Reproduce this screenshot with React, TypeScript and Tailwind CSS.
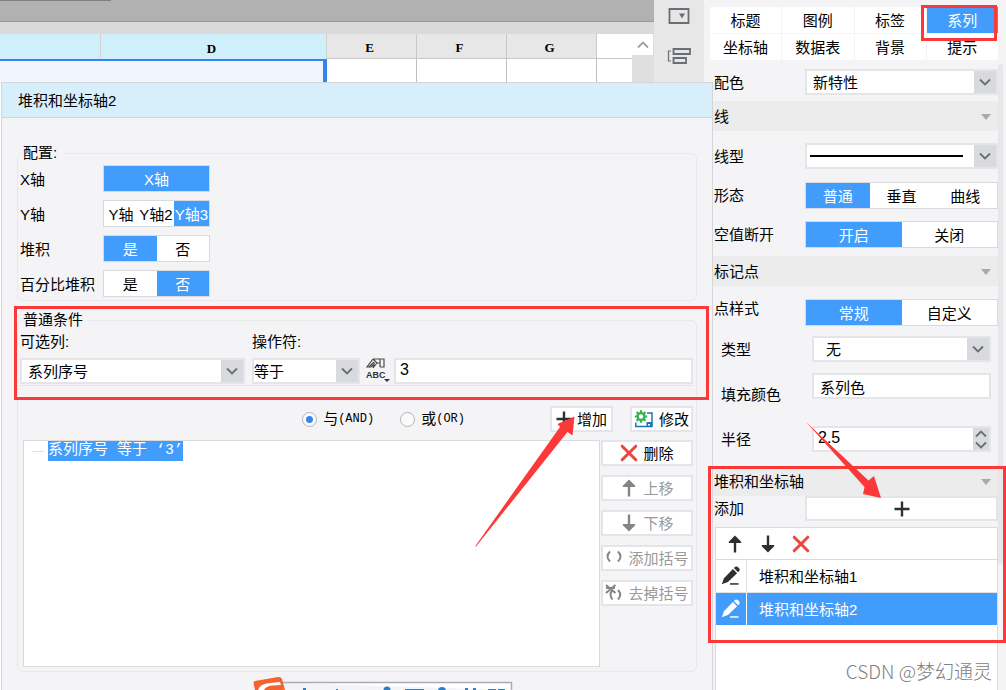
import React, { useState } from "react";

type Option = { label: string; width?: string };

function Chevron({ up = false, className = "" }: { up?: boolean; className?: string }) {
  return (
    <svg viewBox="0 0 12 8" className={`h-2 w-3 ${className}`} fill="none" stroke="currentColor" strokeWidth="1.8">
      <path d={up ? "M1 6.5 6 1.5 11 6.5" : "M1 1.5 6 6.5 11 1.5"} />
    </svg>
  );
}

function Triangle() {
  return (
    <svg viewBox="0 0 10 6" className="h-[6px] w-[10px]" fill="#a9a9a9">
      <path d="M0 0H10L5 6Z" />
    </svg>
  );
}

function Plus() {
  return (
    <svg viewBox="0 0 16 16" className="size-4 shrink-0" stroke="#2f2f2f" strokeWidth="2.4">
      <path d="M8 .5V15.500M.5 8H15.500" />
    </svg>
  );
}

function Cross() {
  return (
    <svg viewBox="0 0 18 18" className="size-[18px] shrink-0" stroke="#e9473f" strokeWidth="3" strokeLinecap="round">
      <path d="M2.200 2.200 15.800 15.800M15.800 2.200 2.200 15.800" />
    </svg>
  );
}

function Arrow({ down = false, color }: { down?: boolean; color: string }) {
  return (
    <svg viewBox="0 0 18 18" className="size-[18px] shrink-0" fill={color}>
      {down ? (
        <path d="M7.800 .5H10.200V10H15.200V11.200L9 17.500 2.800 11.200V10H7.800Z" />
      ) : (
        <path d="M7.800 17.500H10.200V8H15.200V6.800L9 .5 2.800 6.800V8H7.800Z" />
      )}
    </svg>
  );
}

function Pencil({ color }: { color: string }) {
  return (
    <svg viewBox="0 0 20 20" className="size-5" fill={color}>
      <path d="M.8 18.300 3 12.200 11.900 3 16.100 7.200 6.900 16.100Z" />
      <path d="M12.900 2 14.300 .8Q15.600 0 16.800 1L18.200 2.400Q19.200 3.700 18.300 5L17.100 6.200Z" />
      <path d="M9 17.200H17.500V18.700H9Z" />
    </svg>
  );
}

function GearSave() {
  return (
    <svg viewBox="0 0 20 18" className="h-[18px] w-5 shrink-0" fill="none">
      <path d="M13 3H18V16.5H1.8V12.5" stroke="#1f74b9" strokeWidth="1.5" />
      <path d="M12.5 12H18V16.5H12.5Z" fill="#1f74b9" />
      <path d="M14 14H16V15.5H14Z" fill="#fff" />
      <circle cx="7" cy="6.5" r="3.4" stroke="#36b34f" strokeWidth="2.4" fill="#fff" />
      <path
        d="M7 .3V3M7 10V12.7M.8 6.5H3.5M10.5 6.5H13.2M2.6 2.1 4.5 4M9.5 9 11.4 10.9M2.6 10.9 4.5 9M9.5 4 11.4 2.1"
        stroke="#36b34f"
        strokeWidth="2.2"
      />
    </svg>
  );
}

function Brackets({ crossed = false }: { crossed?: boolean }) {
  return (
    <svg viewBox="0 0 18 18" className="size-[18px] shrink-0" fill="none" stroke="#858585" strokeWidth="2">
      {crossed ? (
        <>
          <path d="M7.500 6Q3.500 10.500 7.500 15.500M13 6Q17.500 10.500 13 15.500" />
          <path d="M1 1 10.500 9M10.500 1 1 9M1 4H10" strokeWidth="2" />
        </>
      ) : (
        <path d="M5 2.500Q0 7.500 5 12.500M13 2.500Q18 7.500 13 12.500" />
      )}
    </svg>
  );
}

function Segments({ name, options, initial }: { name: string; options: Option[]; initial: number }) {
  const [active, setActive] = useState(initial);
  return (
    <div role="group" aria-label={name} className="flex h-[27px] w-full border border-[#d9dade] bg-white">
      {options.map((o, i) => (
        <button
          key={o.label}
          type="button"
          aria-pressed={i === active}
          onClick={() => setActive(i)}
          className={`h-full whitespace-nowrap pt-[3px] ${o.width ?? "flex-1"} ${
            i === active ? "bg-[#429cfb] text-white" : "bg-white text-black"
          }`}
        >
          {o.label}
        </button>
      ))}
    </div>
  );
}

function Dropdown({
  id,
  value,
  pad = "pl-[7px]",
  children,
}: {
  id: string;
  value: string;
  pad?: string;
  children?: React.ReactNode;
}) {
  return (
    <div className="grid h-[26px] w-full items-center border-2 border-[#e4e5e8] bg-white">
      <select
        id={id}
        className={`col-start-1 row-start-1 h-[22px] w-full appearance-none bg-white pt-px leading-[22px] outline-none ${pad}`}
      >
        <option>{value}</option>
      </select>
      {children}
      <span className="pointer-events-none col-start-1 row-start-1 flex h-[22px] w-[22px] items-center justify-center justify-self-end bg-[#d9dade] text-[#6b6d72]">
        <Chevron />
      </span>
    </div>
  );
}

function SideButton({ icon, text, disabled = false }: { icon: React.ReactNode; text: string; disabled?: boolean }) {
  return (
    <button
      type="button"
      disabled={disabled}
      className="flex h-[26px] w-full items-center justify-center gap-[5px] border-2 border-[#e4e5e8] bg-white whitespace-nowrap text-black disabled:text-[#999]"
    >
      {icon}
      <span className="pt-px">{text}</span>
    </button>
  );
}

function Section({ title }: { title: string }) {
  return (
    <button type="button" className="flex h-[30px] w-full items-center justify-between bg-[#ececec] pr-[7px] pl-px pt-px">
      <span>{title}</span>
      <Triangle />
    </button>
  );
}

function Row({
  label,
  htmlFor,
  inset = false,
  drop = "pt-[3px]",
  children,
}: {
  label: string;
  htmlFor?: string;
  inset?: boolean;
  drop?: string;
  children: React.ReactNode;
}) {
  return (
    <div className={`flex h-[26px] items-start ${inset ? "pr-[7px] pl-2" : "pl-px"}`}>
      <label htmlFor={htmlFor} className={`w-[91px] shrink-0 whitespace-nowrap ${drop}`}>
        {label}
      </label>
      <div className="min-w-0 flex-1">{children}</div>
    </div>
  );
}

function Sheet() {
  return (
    <div className="min-w-0 flex-1 bg-white">
      <div className="h-[22px] border-b border-[#999] bg-[#b1b1b1]">
        <div className="h-px w-[111px] bg-[#808080]" />
      </div>
      <div className="h-3 bg-[#dadadb]" />
      <div className="flex">
        <table className="min-w-0 flex-1 table-fixed border-separate border-spacing-0 font-['Liberation_Serif','Noto_Sans_CJK_SC',serif] text-[13px]">
          <colgroup>
            <col className="w-[101px]" />
            <col className="w-[226px]" />
            <col className="w-[90px]" />
            <col className="w-[90px]" />
            <col className="w-[90px]" />
            <col />
          </colgroup>
          <thead>
            <tr className="h-[25px] leading-5">
              <th className="border-r border-[#d8d0d4] bg-[#cfeffa]" />
              <th className="border-r border-[#d0d0d0] bg-[#cfeffa] pt-1 pr-1 font-semibold">D</th>
              <th className="border-r border-b border-[#c8c8c8] bg-[#e7e7e7] pt-1 pr-1 font-semibold">E</th>
              <th className="border-r border-b border-[#c8c8c8] bg-[#e7e7e7] pt-1 pr-1 font-semibold">F</th>
              <th className="border-r border-b border-[#c8c8c8] bg-[#e7e7e7] pt-1 pr-1 font-semibold">G</th>
              <th className="border-b border-[#c8c8c8] bg-white" />
            </tr>
          </thead>
          <tbody>
            <tr className="h-6">
              <td colSpan={2} className="border-t-2 border-r-4 border-[#3684ee] bg-[#eff6fe]" />
              <td className="border-r border-[#c0c0c0]" />
              <td className="border-r border-[#c0c0c0]" />
              <td className="border-r border-[#c0c0c0]" />
              <td />
            </tr>
          </tbody>
        </table>
        <div className="flex h-12 w-[22px] flex-col bg-[#dfdfdf] pr-px">
          <button type="button" aria-label="Scroll up" className="flex h-[21px] items-center justify-center bg-white text-[#a0a0a0]">
            <Chevron up />
          </button>
        </div>
      </div>
    </div>
  );
}

function ToolStrip() {
  return (
    <div className="flex w-[50px] flex-col items-center bg-[#e7e7e8] pt-2">
      <button type="button" aria-label="Widget">
        <svg viewBox="0 0 22 16" className="h-4 w-[22px]" fill="none" stroke="#6c6e77" strokeWidth="1.800">
          <path d="M1.500 1H20.500V15H1.500Z" />
          <path d="M11 5.500H17L14 10.500Z" fill="#6c6e77" stroke="none" />
        </svg>
      </button>
      <button type="button" aria-label="Hierarchy" className="mt-[23px]">
        <svg viewBox="0 0 24 18" className="h-[18px] w-6" fill="none" stroke="#6c6e77" strokeWidth="1.800">
          <path d="M6.500 2H23V7H6.500ZM6.500 11H19V16H6.500Z" />
          <path d="M4 4H1.500V14H4" strokeWidth="1.200" />
        </svg>
      </button>
    </div>
  );
}

const TABS = ["标题", "图例", "标签", "系列", "坐标轴", "数据表", "背景", "提示"];

function PropertiesPanel() {
  const [tab, setTab] = useState("系列");
  return (
    <aside className="flex w-[302px] shrink-0 flex-col bg-[#f4f4f6] pt-[7px]">
      <nav className="mr-2 ml-[6px] grid grid-cols-4 gap-px">
        {TABS.map((t) => (
          <button
            key={t}
            type="button"
            onClick={() => setTab(t)}
            className={`h-[26px] pt-[2px] ${t === tab ? "bg-[#429cfb] text-white" : "bg-white text-black"}`}
          >
            {t}
          </button>
        ))}
      </nav>
      <div className="mt-1 flex min-h-0 flex-1">
        <div className="flex min-w-0 flex-1 flex-col pt-[5px] pl-[9px]">
          <Row label="配色" htmlFor="palette" drop="pt-1">
            <Dropdown id="palette" value="新特性" pad="pl-[6px]" />
          </Row>
          <div className="mt-[6px] mb-3">
            <Section title="线" />
          </div>
          <div className="flex flex-col gap-[13px]">
            <Row label="线型" htmlFor="lineStyle" drop="pt-1">
              <Dropdown id="lineStyle" value="">
                <span className="pointer-events-none col-start-1 row-start-1 mr-[33px] ml-[3px] h-[2px] bg-black" />
              </Dropdown>
            </Row>
            <Row label="形态" drop="pt-1">
              <Segments name="形态" initial={0} options={[{ label: "普通" }, { label: "垂直" }, { label: "曲线" }]} />
            </Row>
            <Row label="空值断开" drop="pt-1">
              <Segments name="空值断开" initial={0} options={[{ label: "开启" }, { label: "关闭" }]} />
            </Row>
          </div>
          <div className="mt-[9px] mb-[13px]">
            <Section title="标记点" />
          </div>
          <div className="flex flex-col gap-[11px]">
            <Row label="点样式" drop="pt-0">
              <Segments name="点样式" initial={0} options={[{ label: "常规" }, { label: "自定义" }]} />
            </Row>
            <Row label="类型" htmlFor="pointType" inset drop="pt-1">
              <Dropdown id="pointType" value="无" pad="pl-3" />
            </Row>
            <Row label="填充颜色" htmlFor="fill" inset drop="pt-3">
              <input
                id="fill"
                defaultValue="系列色"
                className="h-[26px] w-full border-2 border-[#e4e5e8] bg-white pl-[6px] outline-none"
              />
            </Row>
          </div>
          <div className="mt-[27px] mb-[14px]">
            <Row label="半径" htmlFor="radius" inset drop="pt-1">
              <div className="flex h-[26px] border-2 border-[#e4e5e8] bg-white">
                <input
                  id="radius"
                  defaultValue="2.5"
                  className="min-w-0 flex-1 bg-white pb-[2px] pl-1 font-['Liberation_Sans',sans-serif] text-base leading-5 outline-none"
                />
                <div className="flex w-4 flex-col bg-[#d9dade] text-[#6b6d72]">
                  <button type="button" aria-label="Increase" className="flex flex-1 items-center justify-center">
                    <Chevron up />
                  </button>
                  <button type="button" aria-label="Decrease" className="flex flex-1 items-center justify-center">
                    <Chevron />
                  </button>
                </div>
              </div>
            </Row>
          </div>
          <Section title="堆积和坐标轴" />
          <Row label="添加">
            <button
              type="button"
              aria-label="添加"
              className="flex h-[25px] w-full items-center justify-center border-2 border-[#e4e5e8] bg-white"
            >
              <Plus />
            </button>
          </Row>
          <div className="mt-[5px] ml-[2px] flex flex-1 flex-col border border-b-0 border-[#d9dade] bg-white">
            <div className="flex h-8 items-center gap-[15px] border-b border-[#d9dade] pl-[10px]">
              <button type="button" aria-label="上移">
                <Arrow color="#2f2f2f" />
              </button>
              <button type="button" aria-label="下移">
                <Arrow down color="#2f2f2f" />
              </button>
              <button type="button" aria-label="删除">
                <Cross />
              </button>
            </div>
            <ul>
              <li className="flex h-[33px] border-b border-[#e3e3e6]">
                <button type="button" aria-label="编辑堆积和坐标轴1" className="flex w-[31px] items-center justify-center border-r border-[#e3e3e6]">
                  <Pencil color="#2f2f2f" />
                </button>
                <button type="button" className="flex-1 pt-px pl-3 text-left">
                  堆积和坐标轴1
                </button>
              </li>
              <li className="flex h-8 bg-[#429cfb] text-white">
                <button type="button" aria-label="编辑堆积和坐标轴2" className="flex w-[31px] items-center justify-center border-r border-white">
                  <Pencil color="#ffffff" />
                </button>
                <button type="button" className="flex-1 pt-px pl-3 text-left">
                  堆积和坐标轴2
                </button>
              </li>
            </ul>
          </div>
        </div>
        <div className="mr-[3px] h-[500px] w-[5px] rounded-full bg-[#e7e7e9]" />
      </div>
    </aside>
  );
}

function ConfigRow({ label, options, initial }: { label: string; options: Option[]; initial: number }) {
  return (
    <div className="flex items-center">
      <span className="w-[83px] shrink-0 pt-[3px] whitespace-nowrap">{label}</span>
      <div className="w-[107px]">
        <Segments name={label} options={options} initial={initial} />
      </div>
    </div>
  );
}

function RadioOption({ label, code, checked = false }: { label: string; code: string; checked?: boolean }) {
  return (
    <label className="flex items-center gap-[6px]">
      <input
        type="radio"
        name="joiner"
        defaultChecked={checked}
        className="size-[15px] appearance-none rounded-full border border-[#b4b4b6] bg-[#fafafa] checked:bg-[radial-gradient(circle,#3684ee_0_3px,#fafafa_4px)]"
      />
      <span className="flex items-center whitespace-nowrap">
        {label}
        <span className="font-['Liberation_Mono',monospace] text-xs leading-5">{code}</span>
      </span>
    </label>
  );
}

function Dialog() {
  return (
    <section
      aria-label="堆积和坐标轴2"
      className="absolute top-[82px] right-[293px] bottom-0 left-px flex flex-col border-x border-t border-[#d6d6da] bg-[#f4f4f6]"
    >
      <h1 className="flex h-[35px] shrink-0 items-center border-b border-[#d6d6da] bg-[#d7effb] pt-px pl-4">堆积和坐标轴2</h1>
      <fieldset className="mx-[15px] mt-[25px] rounded-md border border-[#e9e9eb] pb-[3px] pl-[2px]">
        <legend className="ml-[2px] h-5 px-px pr-2 leading-5">配置:</legend>
        <div className="flex flex-col gap-2 pt-[2px]">
          <ConfigRow label="X轴" initial={0} options={[{ label: "X轴" }]} />
          <ConfigRow
            label="Y轴"
            initial={2}
            options={[
              { label: "Y轴", width: "w-[34px]" },
              { label: "Y轴2", width: "w-[36px]" },
              { label: "Y轴3", width: "w-[35px]" },
            ]}
          />
          <ConfigRow label="堆积" initial={0} options={[{ label: "是" }, { label: "否" }]} />
          <ConfigRow label="百分比堆积" initial={1} options={[{ label: "是" }, { label: "否" }]} />
        </div>
      </fieldset>
      <fieldset className="mx-[15px] mt-[9px] rounded-md border border-[#e9e9eb] pr-[3px] pb-1 pl-[2px]">
        <legend className="ml-[3px] h-5 pr-1 leading-5">普通条件</legend>
        <div className="flex items-end border-b border-[#e3e3e6] pt-px pb-px">
          <div className="w-[225px]">
            <label htmlFor="column" className="block h-[27px] leading-[22px]">
              可选列:
            </label>
            <Dropdown id="column" value="系列序号" pad="pl-[6px]" />
          </div>
          <div className="ml-[7px] w-[108px]">
            <label htmlFor="operator" className="block h-[27px] leading-[22px]">
              操作符:
            </label>
            <Dropdown id="operator" value="等于" pad="pl-0" />
          </div>
          <button type="button" aria-label="Value type" className="mr-[2px] ml-1 h-[26px]">
            <svg viewBox="0 0 28 26" className="h-[26px] w-7" fill="none" stroke="#4a4a4a" strokeWidth="1.200">
              <path d="M9 1H20V9H16M20 1V9M16 1V9M9 1 3 9H7L10 6 9 10 13 5H16M9 1 13 5" />
              <path d="M5 9 10 4" />
              <text x="2" y="20" fontSize="9" fontFamily="Liberation Sans" stroke="none" fill="#333" fontWeight="bold">
                ABC
              </text>
              <path d="M20 21H26L23 24Z" fill="#333" stroke="none" />
            </svg>
          </button>
          <input
            aria-label="值"
            defaultValue="3"
            className="h-[26px] min-w-0 flex-1 border-2 border-[#e4e5e8] bg-white pb-[2px] pl-1 font-['Liberation_Sans',sans-serif] text-base outline-none"
          />
        </div>
        <div className="flex items-center justify-end pt-[20px] pb-[8px]">
          <RadioOption label="与" code="(AND)" checked />
          <div className="w-[26px]" />
          <RadioOption label="或" code="(OR)" />
          <div className="ml-[85px] w-[63px]">
            <SideButton icon={<Plus />} text="增加" />
          </div>
          <div className="ml-[17px] w-[63px]">
            <SideButton icon={<GearSave />} text="修改" />
          </div>
        </div>
        <div className="flex gap-px pl-[3px]">
          <ul className="h-[227px] min-w-0 flex-1 border border-[#d9dade] bg-white">
            <li className="flex items-center pl-2">
              <span className="mr-1 h-px w-3 bg-[#e3e3e6]" />
              <span className="h-5 bg-[#429cfb] font-['Liberation_Mono','Noto_Sans_CJK_SC',monospace] leading-5 whitespace-pre text-white">
                系列序号 等于 ‘3’
              </span>
            </li>
          </ul>
          <div className="flex w-[92px] flex-col gap-[9px]">
            <SideButton icon={<Cross />} text="删除" />
            <SideButton icon={<Arrow color="#858585" />} text="上移" disabled />
            <SideButton icon={<Arrow down color="#858585" />} text="下移" disabled />
            <SideButton icon={<Brackets />} text="添加括号" disabled />
            <SideButton icon={<Brackets crossed />} text="去掉括号" disabled />
          </div>
        </div>
      </fieldset>
    </section>
  );
}

function InputMethodBar() {
  return (
    <svg viewBox="0 0 262 14" className="absolute bottom-0 left-[252px] h-[14px] w-[262px]" fill="none">
      <path d="M20 6.500H259.500V14" stroke="#a9abb5" strokeWidth="1.500" fill="#fff" />
      <path d="M3 14 1.500 7Q1.500 5.500 3 5L26 1Q29 .5 30 3L33 14Z" fill="#f4622f" />
      <path d="M6 14Q8 7.500 18 7L28 6 29 9 20 9.500Q14 10 12 14Z" fill="#fff" />
      <g fill="#2f7fc4">
        <path d="M51 12H54V14H51ZM84 13H86V14H84ZM153 13H172V14H153ZM213 12H216V14H213ZM221 12H224V14H221ZM236 13H244V14H236ZM246 13H253V14H246Z" />
        <circle cx="135" cy="14" r="3.500" />
        <circle cx="190" cy="15" r="4" />
      </g>
    </svg>
  );
}

function Callouts() {
  return (
    <svg viewBox="0 0 1006 690" className="pointer-events-none absolute top-0 right-0 h-[690px] w-[1006px]" fill="none">
      <g stroke="#fd3838" strokeWidth="3">
        <path d="M922.500 6.500H995.500V39.500H922.500Z" />
        <path d="M15.500 307.500H707.500V398.500H15.500Z" />
        <path d="M709.500 467.500H1004.500V641.500H709.500Z" />
      </g>
      <path d="M475 546.500 560 427 557.500 424 574.500 416.500 572.500 435.500 567.500 432 476 546.500Z" fill="#fd3838" />
      <path d="M806 422 868.500 480.500 874 476 881 498 863 494 864.500 487Z" fill="#fd3838" />
    </svg>
  );
}

export default function App() {
  return (
    <main className="relative flex h-screen overflow-hidden bg-[#f4f4f6] font-['Liberation_Sans','Noto_Sans_CJK_SC',sans-serif] text-[15px] leading-5 text-black">
      <Sheet />
      <ToolStrip />
      <PropertiesPanel />
      <Dialog />
      <InputMethodBar />
      <Callouts />
      <p className="absolute right-[14px] bottom-[7px] font-['Noto_Sans_CJK_SC',sans-serif] text-[19px] leading-6 font-light text-[#808082]">
        CSDN @梦幻通灵
      </p>
    </main>
  );
}
